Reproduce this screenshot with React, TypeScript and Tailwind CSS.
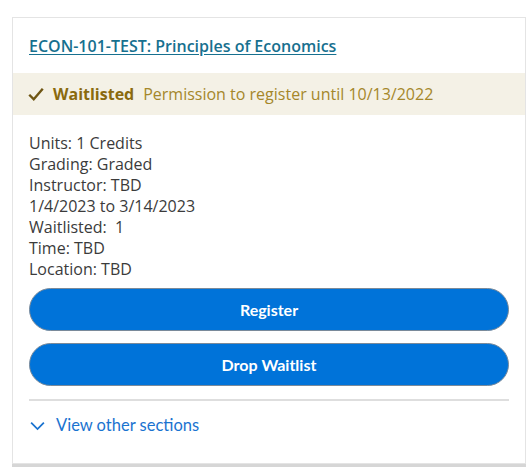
export default function App() {
  const details = [
    'Units: 1 Credits',
    'Grading: Graded',
    'Instructor: TBD',
    '1/4/2023 to 3/14/2023',
    'Waitlisted:\u00a0 1',
    'Time: TBD',
    'Location: TBD',
  ]

  return (
    <div className="min-h-screen bg-white pt-[17px] pl-[12px]">
      {/* Section card */}
      <div className="w-[514px] border border-[#e4e4e4] bg-white shadow-[0_3px_0_#d6d6d6]">
        <div className="px-[16px] pt-[16px] pb-[15px]">
          <a
            href="#"
            className="text-[16px] leading-[22px] font-semibold text-[#17708f] underline underline-offset-[2px] font-['Open_Sans',sans-serif]"
          >
            ECON-101-TEST: Principles of Economics
          </a>
        </div>

        {/* Status banner */}
        <div className="flex h-[42px] items-center bg-[#f4f1e6] px-[14px] font-['Open_Sans',sans-serif] text-[16px]">
          <svg className="h-[18px] w-[18px] text-[#6f5614]" viewBox="0 0 24 24" fill="none" stroke="currentColor" strokeWidth={3.2}>
            <path d="M3 13l6 6L21 5" />
          </svg>
          <span className="ml-[8px] font-bold text-[#8a6a0e]">Waitlisted</span>
          <span className="ml-[9px] text-[#a5872a]">Permission to register until 10/13/2022</span>
        </div>

        <div className="px-[16px] pt-[18px] pb-[27px]">
          <div className="font-['Open_Sans',sans-serif] text-[16px] leading-[21px] text-[#3b3b3b]">
            {details.map((d) => (
              <div key={d}>{d}</div>
            ))}
          </div>

          <div className="mt-[8px] flex flex-col gap-[12px] font-['Lato',sans-serif]">
            <button className="h-[43px] w-full rounded-full border border-[#7a8a9a] bg-[#0073d9] text-[16px] font-bold text-white">
              Register
            </button>
            <button className="h-[43px] w-full rounded-full border border-[#7a8a9a] bg-[#0073d9] text-[16px] font-bold text-white">
              Drop Waitlist
            </button>
          </div>

          <div className="mt-[13px] h-[2px] bg-[#dedede]" />

          <button className="mt-[13px] flex items-center gap-[10px] font-['Lato',sans-serif] text-[16.5px] leading-[22px] text-[#1a73d0]">
            <svg className="h-[17px] w-[17px]" viewBox="0 0 24 24" fill="none" stroke="currentColor" strokeWidth={2.5}>
              <path d="M3 8l9 9 9-9" />
            </svg>
            View other sections
          </button>
        </div>
      </div>
    </div>
  )
}
